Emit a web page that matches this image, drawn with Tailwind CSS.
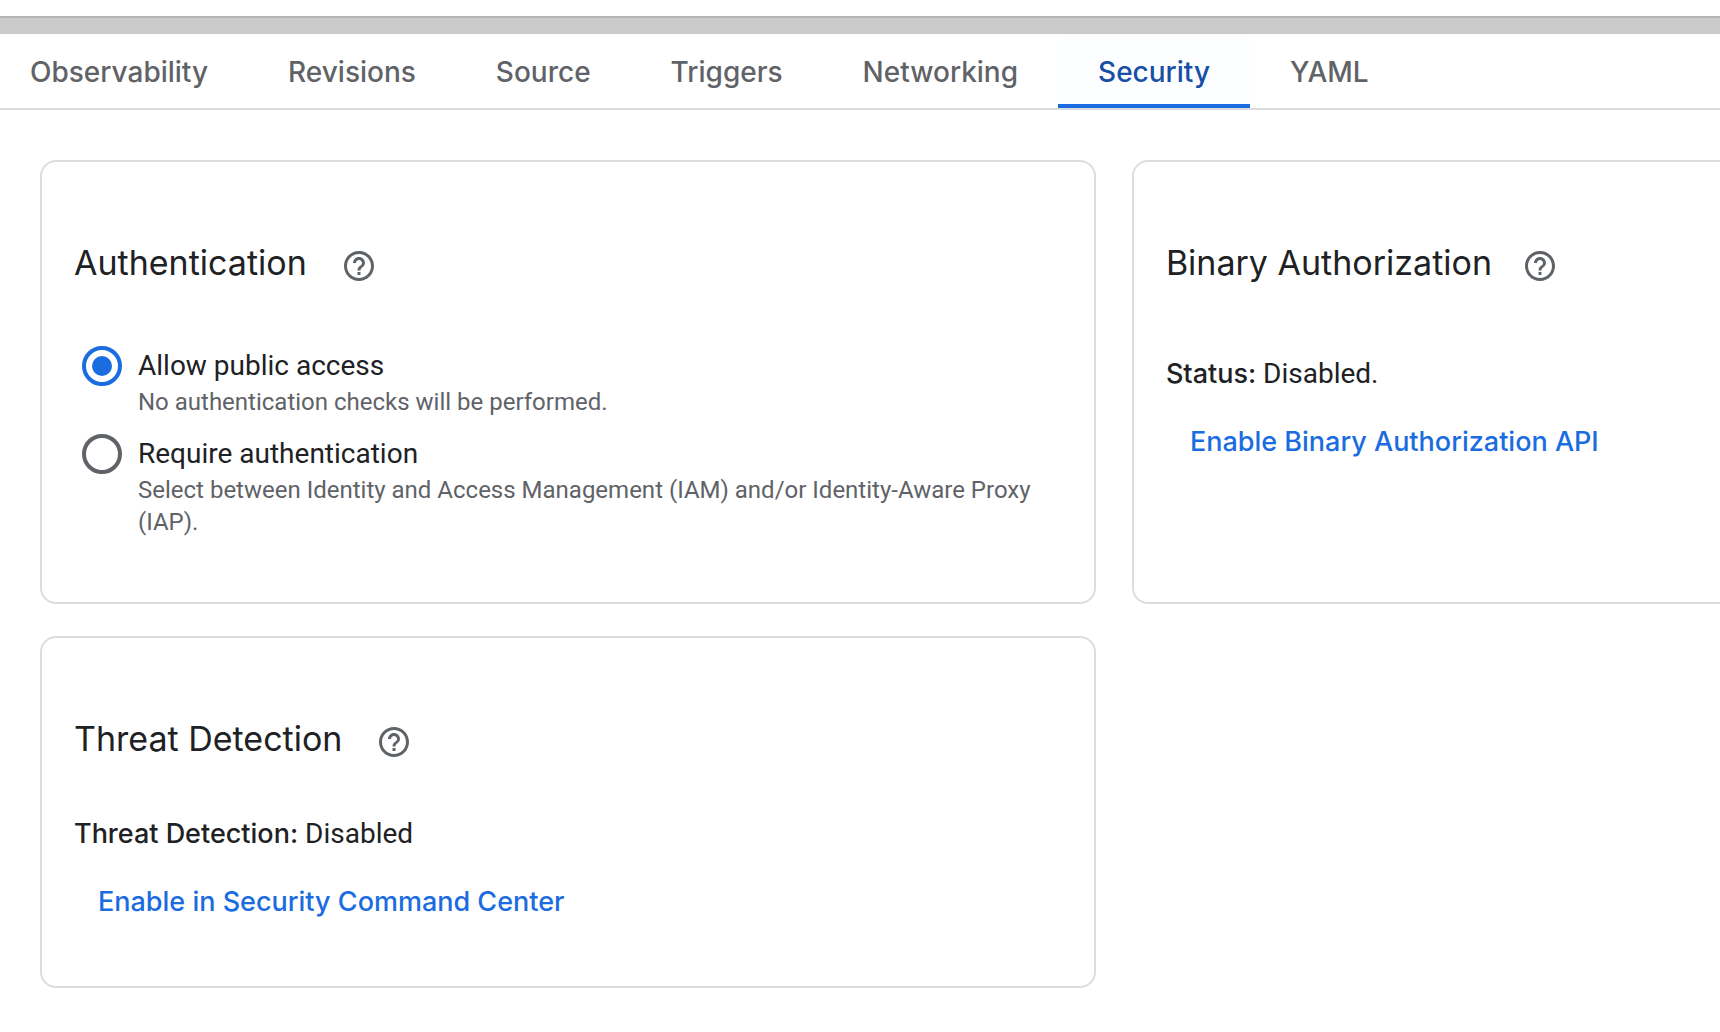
<!DOCTYPE html>
<html lang="en">
<head>
<meta charset="utf-8">
<title>Security</title>
<script src="https://cdn.jsdelivr.net/npm/@tailwindcss/browser@4"></script>
</head>
<body class="min-h-screen overflow-x-hidden bg-white font-['Roboto',sans-serif] text-[28px] leading-10 text-[#202124]">
  <div class="mt-4 h-[18px] border-t-2 border-[#b5b5b5] bg-[#cbcbcb]"></div>

  <nav class="flex h-[76px] border-b-2 border-[#dadce0] font-['Inter',sans-serif] font-medium text-[#5f6368]">
    <a href="#" class="flex items-center pt-0.5 pr-10 pl-[30px]">Observability</a>
    <a href="#" class="flex items-center px-10 pt-0.5">Revisions</a>
    <a href="#" class="flex items-center px-10 pt-0.5">Source</a>
    <a href="#" class="flex items-center px-10 pt-0.5">Triggers</a>
    <a href="#" class="flex items-center px-10 pt-0.5">Networking</a>
    <a href="#" aria-current="page" class="flex items-center border-b-4 border-[#1a6ce0] bg-[#fdfeff] px-10 pt-1.5 text-[#174ea6]">Security</a>
    <a href="#" class="flex items-center px-10 pt-0.5">YAML</a>
  </nav>

  <main class="grid grid-cols-[63%_63%] gap-x-9 gap-y-8 pt-[50px] pr-1 pb-11 pl-10">
    <section class="rounded-2xl border-2 border-[#dadce0] px-8 pt-20 pb-16">
      <div class="flex items-end gap-[34px]">
        <h2 class="font-['Inter',sans-serif] text-[34px] leading-[42px]">Authentication</h2>
        <button type="button" aria-label="Help: Authentication" class="text-[#5f6368]">
          <svg class="block size-9" viewBox="0 0 24 24" fill="currentColor"><path d="M11 18h2v-2h-2v2zm1-16C6.480 2 2 6.480 2 12s4.480 10 10 10 10-4.480 10-10S17.520 2 12 2zm0 18c-4.410 0-8-3.590-8-8s3.590-8 8-8 8 3.590 8 8-3.590 8-8 8zm0-14c-2.210 0-4 1.790-4 4h2c0-1.100.900-2 2-2s2 .900 2 2c0 2-3 1.750-3 5h2c0-2.250 3-2.500 3-5 0-2.210-1.790-4-4-4z"/></svg>
        </button>
      </div>
      <div class="mt-[62px] flex flex-col gap-4 pl-2">
        <div class="flex items-start gap-4">
          <input id="public" type="radio" name="access" checked aria-describedby="public-note" class="size-10 shrink-0 appearance-none rounded-full border-4 border-[#5f6368] checked:border-[#1a6ce0] checked:bg-[#1a6ce0] checked:bg-clip-content checked:p-[6px]">
          <div>
            <label for="public" class="block">Allow public access</label>
            <p id="public-note" class="text-2xl text-[#5f6368]">No authentication checks will be performed.</p>
          </div>
        </div>
        <div class="flex items-start gap-4">
          <input id="required" type="radio" name="access" aria-describedby="required-note" class="size-10 shrink-0 appearance-none rounded-full border-4 border-[#5f6368] checked:border-[#1a6ce0] checked:bg-[#1a6ce0] checked:bg-clip-content checked:p-[6px]">
          <div>
            <label for="required" class="block">Require authentication</label>
            <p id="required-note" class="text-2xl text-[#5f6368]">Select between Identity and Access Management (IAM) and/or Identity-Aware Proxy (IAP).</p>
          </div>
        </div>
      </div>
    </section>

    <section class="rounded-2xl border-2 border-[#dadce0] px-8 pt-20 pb-16">
      <div class="flex items-end gap-[30px]">
        <h2 class="font-['Inter',sans-serif] text-[34px] leading-[42px]">Binary Authorization</h2>
        <button type="button" aria-label="Help: Binary Authorization" class="text-[#5f6368]">
          <svg class="block size-9" viewBox="0 0 24 24" fill="currentColor"><path d="M11 18h2v-2h-2v2zm1-16C6.480 2 2 6.480 2 12s4.480 10 10 10 10-4.480 10-10S17.520 2 12 2zm0 18c-4.410 0-8-3.590-8-8s3.590-8 8-8 8 3.590 8 8-3.590 8-8 8zm0-14c-2.210 0-4 1.790-4 4h2c0-1.100.900-2 2-2s2 .900 2 2c0 2-3 1.750-3 5h2c0-2.250 3-2.500 3-5 0-2.210-1.790-4-4-4z"/></svg>
        </button>
      </div>
      <p class="mt-[70px]"><strong class="font-['Inter',sans-serif] text-[27px] font-medium">Status:</strong> Disabled.</p>
      <button type="button" class="mt-7 block px-6 font-['Inter',sans-serif] text-[27px] font-medium text-[#1a6ce0]">Enable Binary Authorization API</button>
    </section>

    <section class="rounded-2xl border-2 border-[#dadce0] px-8 pt-20 pb-16">
      <div class="flex items-end gap-[34px]">
        <h2 class="font-['Inter',sans-serif] text-[34px] leading-[42px]">Threat Detection</h2>
        <button type="button" aria-label="Help: Threat Detection" class="text-[#5f6368]">
          <svg class="block size-9" viewBox="0 0 24 24" fill="currentColor"><path d="M11 18h2v-2h-2v2zm1-16C6.480 2 2 6.480 2 12s4.480 10 10 10 10-4.480 10-10S17.520 2 12 2zm0 18c-4.410 0-8-3.590-8-8s3.590-8 8-8 8 3.590 8 8-3.590 8-8 8zm0-14c-2.210 0-4 1.790-4 4h2c0-1.100.900-2 2-2s2 .900 2 2c0 2-3 1.750-3 5h2c0-2.250 3-2.500 3-5 0-2.210-1.790-4-4-4z"/></svg>
        </button>
      </div>
      <p class="mt-[54px]"><strong class="font-['Inter',sans-serif] text-[27px] font-medium">Threat Detection:</strong> Disabled</p>
      <button type="button" class="mt-7 block px-6 font-['Inter',sans-serif] text-[27px] font-medium text-[#1a6ce0]">Enable in Security Command Center</button>
    </section>
  </main>
</body>
</html>
